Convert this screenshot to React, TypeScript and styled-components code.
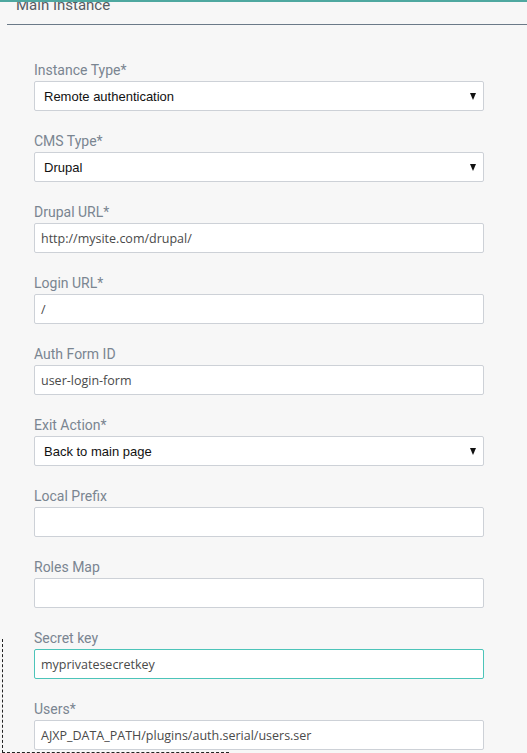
import React from "react";
import styled, { createGlobalStyle } from "styled-components";

type Field = {
    label: string;
    kind: "select" | "input";
    value: string;
    focused?: boolean;
};

const fields: Field[] = [
    { label: "Instance Type*", kind: "select", value: "Remote authentication" },
    { label: "CMS Type*", kind: "select", value: "Drupal" },
    { label: "Drupal URL*", kind: "input", value: "http://mysite.com/drupal/" },
    { label: "Login URL*", kind: "input", value: "/" },
    { label: "Auth Form ID", kind: "input", value: "user-login-form" },
    { label: "Exit Action*", kind: "select", value: "Back to main page" },
    { label: "Local Prefix", kind: "input", value: "" },
    { label: "Roles Map", kind: "input", value: "" },
    { label: "Secret key", kind: "input", value: "myprivatesecretkey", focused: true },
    { label: "Users*", kind: "input", value: "AJXP_DATA_PATH/plugins/auth.serial/users.ser" },
];

const GlobalStyle = createGlobalStyle`
    html, body {
        margin: 0;
        padding: 0;
        background: #f7f7f7;
        overflow: hidden;
    }
`;

const Screen = styled.div`
    position: relative;
    width: 527px;
    height: 753px;
    overflow: hidden;
    background: #f7f7f7;
    font-family: Roboto, "Noto Sans", sans-serif;
`;

const TopBar = styled.div`
    position: absolute;
    top: 0;
    left: 0;
    right: 0;
    height: 2px;
    background: #4fa8a0;
    z-index: 2;
`;

const Panel = styled.section`
    margin-left: 7px;
`;

const Legend = styled.h2`
    margin: -4px 0 0;
    padding: 0 0 10px 9px;
    border-bottom: 1px solid #6b7a88;
    color: #555b62;
    font-size: 15px;
    line-height: 18px;
    font-weight: 400;
`;

const Form = styled.div`
    display: flex;
    flex-direction: column;
    gap: 20px;
    padding: 35px 43px 0 27px;
`;

const FieldRow = styled.div`
    display: flex;
    flex-direction: column;
    gap: 1px;
`;

const Label = styled.label`
    color: #7a8591;
    font-size: 14px;
    line-height: 20px;
`;

const Box = styled.div<{ $focused?: boolean }>`
    height: 30px;
    box-sizing: border-box;
    border: 1px solid ${p => (p.$focused ? "#4cc4b9" : "#cdd1d7")};
    border-radius: 2px;
    background: #ffffff;
    display: flex;
    align-items: center;
`;

const SelectText = styled.span`
    flex: 1;
    padding-left: 9px;
    color: #111111;
    font-family: "Liberation Sans", Arial, sans-serif;
    font-size: 13px;
`;

const Caret = styled.span`
    width: 0;
    height: 0;
    margin-right: 7px;
    border-left: 3.5px solid transparent;
    border-right: 3.5px solid transparent;
    border-top: 7px solid #111111;
`;

const InputText = styled.span`
    padding-left: 6px;
    color: #4a4a4a;
    font-family: "Open Sans", sans-serif;
    font-size: 12.5px;
    white-space: nowrap;
`;

const DashedFrame = styled.div`
    position: absolute;
    left: 2px;
    top: 639px;
    width: 226px;
    height: 113px;
    border-left: 1px dashed #222;
    border-bottom: 1px dashed #222;
    pointer-events: none;
`;

export default function App() {
    return (
        <Screen>
            <GlobalStyle />
            <TopBar />
            <Panel>
                <Legend>Main Instance</Legend>
                <Form>
                    {fields.map(field => (
                        <FieldRow key={field.label}>
                            <Label>{field.label}</Label>
                            <Box $focused={field.focused}>
                                {field.kind === "select" ? (
                                    <>
                                        <SelectText>{field.value}</SelectText>
                                        <Caret />
                                    </>
                                ) : (
                                    <InputText>{field.value}</InputText>
                                )}
                            </Box>
                        </FieldRow>
                    ))}
                </Form>
            </Panel>
            <DashedFrame />
        </Screen>
    );
}
